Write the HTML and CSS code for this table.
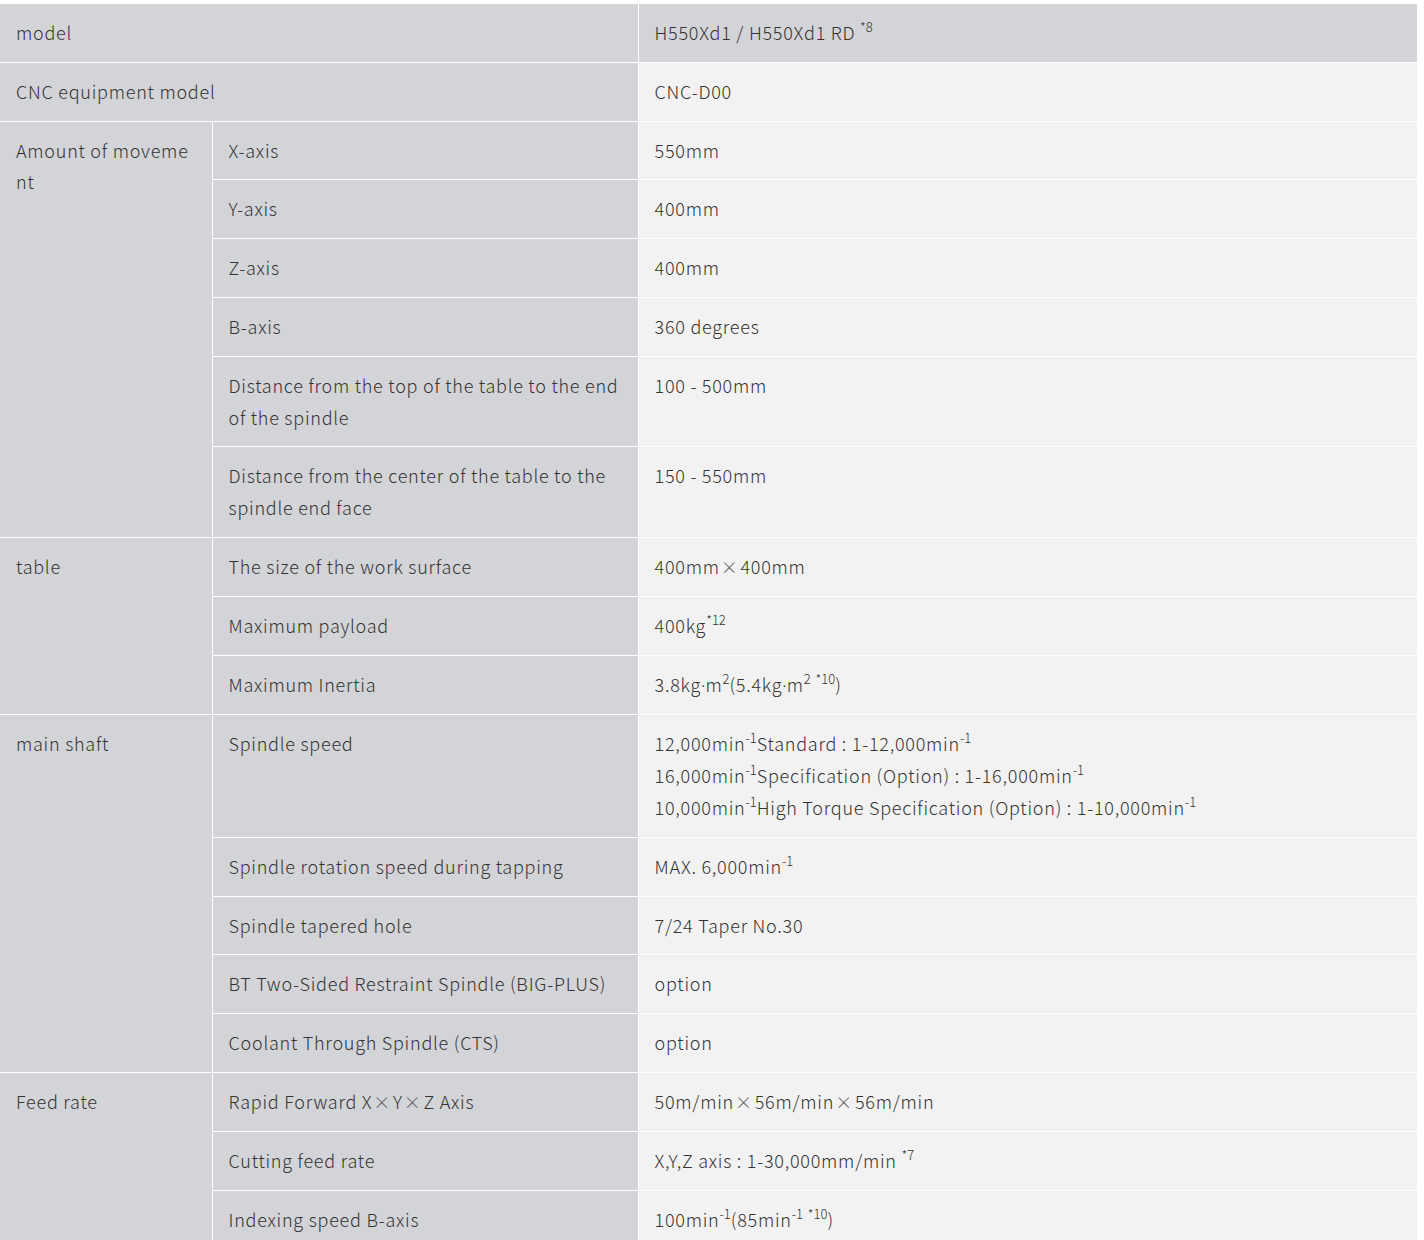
FILE: index.html
```html
<!DOCTYPE html>
<html lang="en">
<head>
<meta charset="utf-8">
<title>Specifications</title>
<link rel="stylesheet" href="styles.css">
</head>
<body>
<table class="spec">
  <colgroup>
    <col class="c1">
    <col class="c2">
    <col class="c3">
  </colgroup>
  <tbody>
    <tr class="head">
      <th colspan="2">model</th>
      <td>H550Xd1 / H550Xd1 RD <sup>*8</sup></td>
    </tr>
    <tr>
      <th colspan="2">CNC equipment model</th>
      <td>CNC-D00</td>
    </tr>
    <tr>
      <th rowspan="6" class="grp">Amount of moveme<br>nt</th>
      <th>X-axis</th>
      <td>550mm</td>
    </tr>
    <tr><th>Y-axis</th><td>400mm</td></tr>
    <tr><th>Z-axis</th><td>400mm</td></tr>
    <tr><th>B-axis</th><td>360 degrees</td></tr>
    <tr><th>Distance from the top of the table to the end of the spindle</th><td>100 - 500mm</td></tr>
    <tr><th>Distance from the center of the table to the spindle end face</th><td>150 - 550mm</td></tr>
    <tr>
      <th rowspan="3" class="grp">table</th>
      <th>The size of the work surface</th>
      <td>400mm<span class="x">×</span>400mm</td>
    </tr>
    <tr><th>Maximum payload</th><td>400kg<sup>*12</sup></td></tr>
    <tr><th>Maximum Inertia</th><td>3.8kg<span class="dot">·</span>m<sup>2</sup>(5.4kg<span class="dot">·</span>m<sup>2</sup> <sup>*10</sup>)</td></tr>
    <tr>
      <th rowspan="5" class="grp">main shaft</th>
      <th>Spindle speed</th>
      <td>12,000min<sup>-1</sup>Standard : 1-12,000min<sup>-1</sup><br>16,000min<sup>-1</sup>Specification (Option) : 1-16,000min<sup>-1</sup><br>10,000min<sup>-1</sup>High Torque Specification (Option) : 1-10,000min<sup>-1</sup></td>
    </tr>
    <tr><th>Spindle rotation speed during tapping</th><td>MAX. 6,000min<sup>-1</sup></td></tr>
    <tr><th>Spindle tapered hole</th><td>7/24 Taper No.30</td></tr>
    <tr><th>BT Two-Sided Restraint Spindle (BIG-PLUS)</th><td>option</td></tr>
    <tr><th>Coolant Through Spindle (CTS)</th><td>option</td></tr>
    <tr>
      <th rowspan="3" class="grp">Feed rate</th>
      <th>Rapid Forward X<span class="x">×</span>Y<span class="x">×</span>Z Axis</th>
      <td>50m/min<span class="x">×</span>56m/min<span class="x">×</span>56m/min</td>
    </tr>
    <tr><th>Cutting feed rate</th><td>X,Y,Z axis : 1-30,000mm/min <sup>*7</sup></td></tr>
    <tr><th>Indexing speed B-axis</th><td>100min<sup>-1</sup>(85min<sup>-1</sup> <sup>*10</sup>)</td></tr>
  </tbody>
</table>
</body>
</html>
```

FILE: styles.css
```css
html, body {
  margin: 0;
  padding: 0;
  background: #ffffff;
}
body {
  padding-top: 3px;
  font-family: "Noto Sans CJK JP", "Noto Sans", sans-serif;
  color: #333333;
}
.spec {
  width: 1418px;
  border-collapse: collapse;
  table-layout: fixed;
  font-size: 18px;
  font-weight: 300;
  letter-spacing: 0.75px;
}
.c1 { width: 212px; }
.c2 { width: 426px; }
.spec th,
.spec td {
  border: 1px solid #ffffff;
  padding: 13px 16px;
  line-height: 31.8px;
  text-align: left;
  vertical-align: top;
  font-weight: 300;
}
.spec tr > :first-child { border-left: none; }
.spec th { background: #d3d4d8; }
.spec td { background: #f2f2f2; }
.spec .head td { background: #d3d4d8; }
.spec sup {
  font-size: 13px;
  line-height: 0;
  vertical-align: 8px;
  letter-spacing: 0;
}
.x {
  font-size: 17px;
  color: #555555;
  padding: 0 2px 0 1px;
}
.dot {
  font-family: "Noto Sans", sans-serif;
  letter-spacing: 0;
}
```
